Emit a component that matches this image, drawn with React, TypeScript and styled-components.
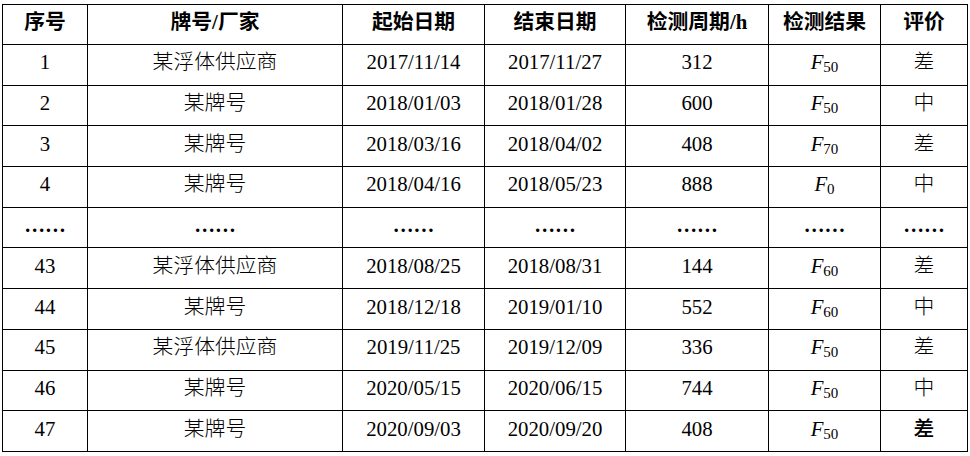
import styled, { createGlobalStyle } from "styled-components";

const GlobalStyle = createGlobalStyle`
  html, body {
    margin: 0;
    padding: 0;
    background: #ffffff;
  }
`;

const Page = styled.div`
  padding: 4px 2px 0 2px;
  font-family: "Liberation Serif", "Noto Sans CJK SC", serif;
  color: #000;
`;

const Table = styled.table`
  border-collapse: collapse;
  table-layout: fixed;
  width: 966px;
  font-size: 20.8px;
  line-height: 1.15;
`;

const Row = styled.tr<{ $h: number }>`
  height: ${(p) => p.$h}px;
`;

const HeadCell = styled.th`
  box-sizing: border-box;
  border: 1.5px solid #000;
  font-weight: 700;
  padding: 0 0 5px 0;
  text-align: center;
  white-space: nowrap;
`;

const Cell = styled.td<{ $bold?: boolean }>`
  box-sizing: border-box;
  border: 1.5px solid #000;
  font-weight: ${(p) => (p.$bold ? 500 : 300)};
  padding: 0 0 5px 0;
  text-align: center;
  white-space: nowrap;
`;

const Dots = styled.span`
  font-size: 20.8px;
  font-weight: 700;
`;

const Italic = styled.i`
  font-style: italic;
`;

const Sub = styled.span`
  font-size: 15px;
  position: relative;
  top: 3px;
`;

const widths = [85, 255, 142, 141, 143, 112, 87];
const headers = ["序号", "牌号/厂家", "起始日期", "结束日期", "检测周期/h", "检测结果", "评价"];

type Data = [string, string, string, string, string, string, string] | null;

const rows: Data[] = [
  ["1", "某浮体供应商", "2017/11/14", "2017/11/27", "312", "50", "差"],
  ["2", "某牌号", "2018/01/03", "2018/01/28", "600", "50", "中"],
  ["3", "某牌号", "2018/03/16", "2018/04/02", "408", "70", "差"],
  ["4", "某牌号", "2018/04/16", "2018/05/23", "888", "0", "中"],
  null,
  ["43", "某浮体供应商", "2018/08/25", "2018/08/31", "144", "60", "差"],
  ["44", "某牌号", "2018/12/18", "2019/01/10", "552", "60", "中"],
  ["45", "某浮体供应商", "2019/11/25", "2019/12/09", "336", "50", "差"],
  ["46", "某牌号", "2020/05/15", "2020/06/15", "744", "50", "中"],
  ["47", "某牌号", "2020/09/03", "2020/09/20", "408", "50", "差"],
];

export default function App() {
  return (
    <>
      <GlobalStyle />
      <Page>
        <Table>
          <colgroup>
            {widths.map((w, i) => (
              <col key={i} style={{ width: w }} />
            ))}
          </colgroup>
          <thead>
            <Row $h={40}>
              {headers.map((h) => (
                <HeadCell key={h}>{h}</HeadCell>
              ))}
            </Row>
          </thead>
          <tbody>
            {rows.map((r, i) =>
              r ? (
                <Row $h={40.7} key={i}>
                  <Cell>{r[0]}</Cell>
                  <Cell>{r[1]}</Cell>
                  <Cell>{r[2]}</Cell>
                  <Cell>{r[3]}</Cell>
                  <Cell>{r[4]}</Cell>
                  <Cell>
                    <Italic>F</Italic>
                    <Sub>{r[5]}</Sub>
                  </Cell>
                  <Cell $bold={i === rows.length - 1}>{r[6]}</Cell>
                </Row>
              ) : (
                <Row $h={40.7} key={i}>
                  {widths.map((_, j) => (
                    <Cell key={j}>
                      <Dots>……</Dots>
                    </Cell>
                  ))}
                </Row>
              )
            )}
          </tbody>
        </Table>
      </Page>
    </>
  );
}
